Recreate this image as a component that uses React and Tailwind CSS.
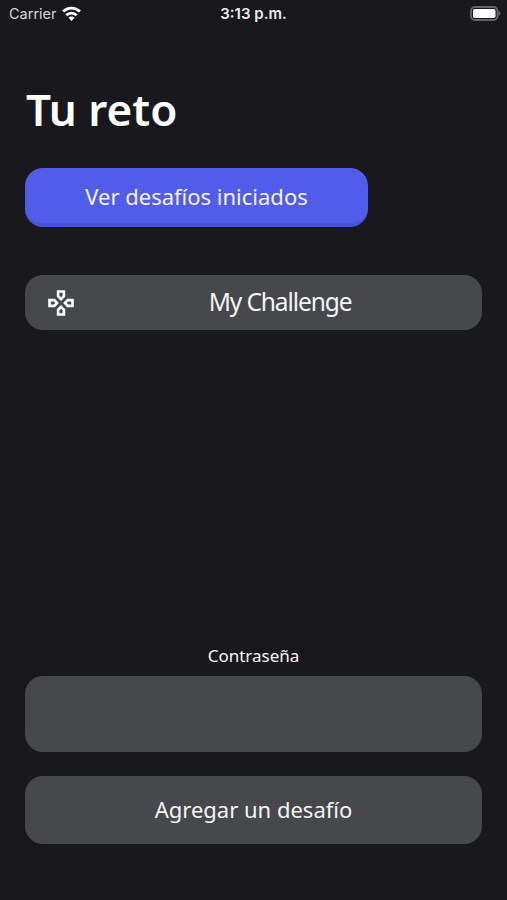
import React from "react";

function StatusBar() {
  return (
    <div className="grid h-7 grid-cols-3 items-center pl-[9px] pr-[6px] font-['Inter','Liberation_Sans',sans-serif]">
      <div className="flex items-center gap-[5px]">
        <span className="text-[14.5px] leading-7 text-[#d6d6d8]">Carrier</span>
        {/* Wifi */}
        <svg className="-mt-[2px]" width="19" height="15" viewBox="0 0 18 14" fill="none" stroke="#ffffff" strokeWidth="2.7">
          <path d="M1 5.2a11.4 11.4 0 0 1 16 0" />
          <path d="M4.1 8.6a7 7 0 0 1 9.8 0" />
          <path d="M9 14 6.1 11a4.1 4.1 0 0 1 5.8 0Z" fill="#ffffff" stroke="none" />
        </svg>
      </div>
      <span className="-ml-[3px] text-center text-[15px] font-semibold leading-7 text-[#ececee]">3:13 p.m.</span>
      {/* Battery */}
      <svg className="-mt-[2px] justify-self-end" width="31" height="15" viewBox="0 0 31 15">
        <rect x="1" y="1" width="26.5" height="13" rx="4" fill="none" stroke="#66666a" strokeWidth="1.8" />
        <rect x="3" y="3" width="22.5" height="9" rx="1.8" fill="#ffffff" />
        <path d="M28.5 5c1.2.5 1.9 1.4 1.9 2.5s-.7 2-1.9 2.5Z" fill="#66666a" />
      </svg>
    </div>
  );
}

function GamepadIcon() {
  return (
    <svg width="26" height="26" viewBox="0 0 26 26" fill="none" stroke="#ffffff" strokeWidth="2.6">
      <path d="M10.1 1.5h5.8v4.8L13 9.1l-2.9-2.8Z" />
      <path d="M24.5 10.1v5.8h-4.8L16.9 13l2.8-2.9Z" />
      <path d="M15.9 24.5h-5.8v-4.8l2.9-2.8 2.9 2.8Z" />
      <path d="M1.5 15.9v-5.8h4.8L9.1 13l-2.8 2.9Z" />
    </svg>
  );
}

function App() {
  return (
    <div className="flex h-[900px] w-[507px] flex-col overflow-hidden bg-[#19181d] font-['Noto_Sans',sans-serif] text-[#f4f4f6]">
      <StatusBar />

      <main className="flex flex-1 flex-col px-[25px] pb-14">
        <h1 className="mt-[51px] h-[60px] pl-px text-[44px] font-semibold leading-[60px] text-white">Tu reto</h1>

        <button className="mt-[29px] h-[59px] w-[343px] rounded-[18px] border-b-4 border-[#4855d2] bg-[#515ceb] pt-[2px] text-[22px]">
          Ver desafíos iniciados
        </button>

        <button className="mt-12 flex h-[55px] items-center rounded-[18px] bg-[#47484c] pl-[23px] pr-2">
          <GamepadIcon />
          <span className="flex-1 pb-px pl-[12px] text-center text-[24.5px] tracking-[-1.1px]">My Challenge</span>
        </button>

        {/* Password + add challenge */}
        <form className="mt-auto flex flex-col">
          <label htmlFor="password" className="mb-2 text-center text-[17px] leading-6">
            Contraseña
          </label>
          <input id="password" type="password" className="h-[76px] rounded-[18px] bg-[#47484c] px-5 text-[22px] outline-none" />
          <button type="button" className="mt-6 h-[68px] rounded-[18px] bg-[#47484c] pb-[2px] text-[22px]">
            Agregar un desafío
          </button>
        </form>
      </main>
    </div>
  );
}

export default App;
